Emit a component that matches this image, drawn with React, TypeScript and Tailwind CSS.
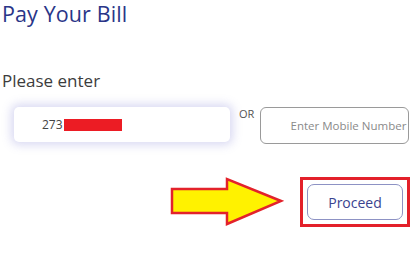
import React from "react";

const FONT = { fontFamily: '"Open Sans", "Liberation Sans", sans-serif' };

function Arrow() {
  return (
    <svg width="114" height="50" viewBox="0 0 114 50" className="block">
      <polygon
        points="2,12 57,12 57,2 111,24 57,47 57,36 2,36"
        fill="#fff200"
        stroke="#e3222b"
        strokeWidth="2.5"
        strokeLinejoin="miter"
      />
    </svg>
  );
}

export default function App() {
  return (
    <div className="relative h-[266px] w-[415px] overflow-hidden bg-white" style={FONT}>
      <h1 className="pl-[2px] pt-[1px] text-[21.5px] leading-[26px] tracking-[0.1px] text-[#2a3588]">
        Pay Your Bill
      </h1>

      <p className="mt-[43px] pl-[2px] text-[17px] leading-[22px] text-[#3c3c3c]">Please enter</p>

      <div className="mt-[15px] flex items-start">
        <div className="ml-[14px] flex h-[35px] w-[216px] items-center rounded-[5px] bg-white pl-[28px] shadow-[0_0_10px_3px_rgba(120,120,210,0.28)]">
          <span className="text-[12px] text-[#444]">273</span>
          <span className="ml-[1px] h-[12px] w-[58px] bg-[#ec1c24]" />
        </div>
        <span className="ml-[9px] mt-[0px] text-[11px] leading-[14px] text-[#555]">OR</span>
        <div className="ml-[6px] flex h-[37px] w-[149px] items-center justify-end rounded-[6px] border border-[#9a9a9a] pr-[2px]">
          <span className="text-[11.5px] text-[#8a8a8a]">Enter Mobile Number</span>
        </div>
      </div>

      <div className="mt-[33px] flex items-center pl-[170px]">
        <Arrow />
        <div className="ml-[16px] border-[3px] border-[#e3202a] p-[4px]">
          <button
            type="button"
            className="flex h-[36px] w-[96px] items-center justify-center rounded-[7px] border border-[#8d92c4] bg-white text-[14px] text-[#3a4390]"
          >
            Proceed
          </button>
        </div>
      </div>
    </div>
  );
}
